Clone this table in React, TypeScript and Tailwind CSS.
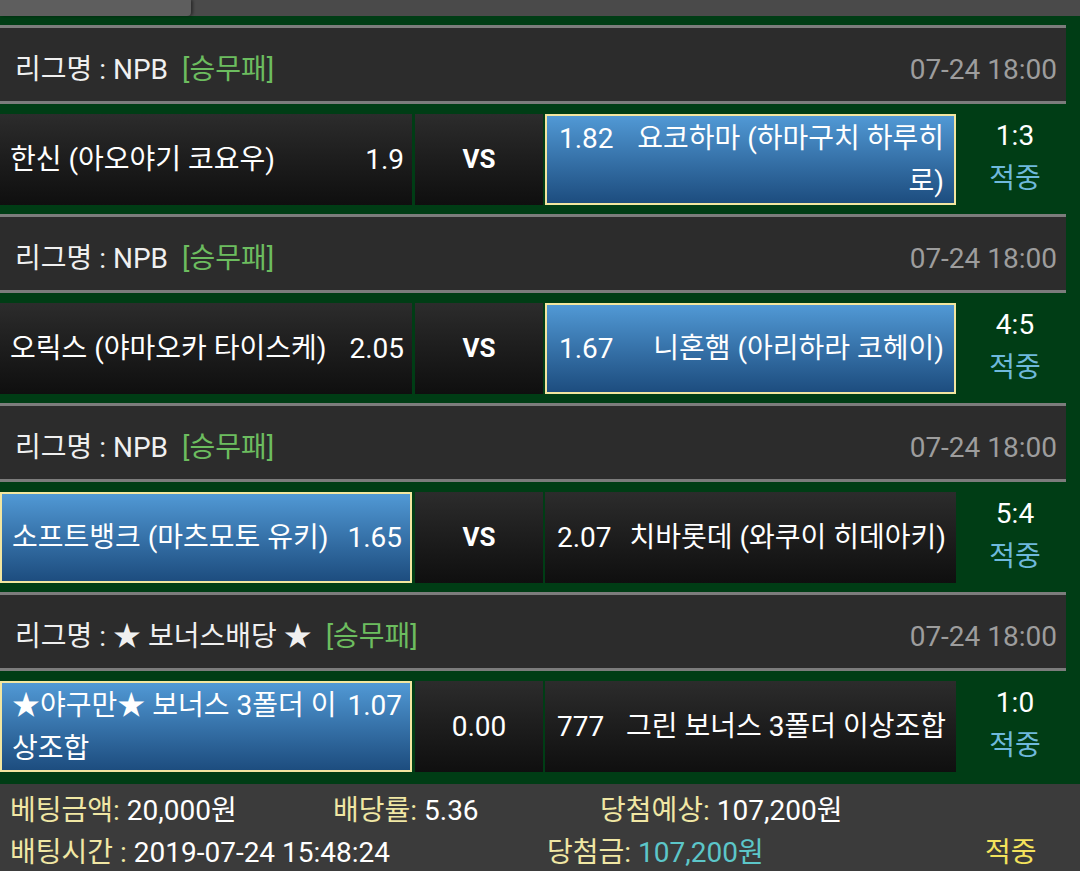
const FONT = "font-['Roboto','Noto_Sans_CJK_KR',sans-serif]"

type Match = {
  league: string
  home: string
  homeOdds: string
  mid: string
  away: string
  awayOdds: string
  pick: 'home' | 'away'
  score: string
}

const matches: Match[] = [
  { league: 'NPB', home: '한신 (아오야기 코요우)', homeOdds: '1.9', mid: 'VS', away: '요코하마 (하마구치 하루히로)', awayOdds: '1.82', pick: 'away', score: '1:3' },
  { league: 'NPB', home: '오릭스 (야마오카 타이스케)', homeOdds: '2.05', mid: 'VS', away: '니혼햄 (아리하라 코헤이)', awayOdds: '1.67', pick: 'away', score: '4:5' },
  { league: 'NPB', home: '소프트뱅크 (마츠모토 유키)', homeOdds: '1.65', mid: 'VS', away: '치바롯데 (와쿠이 히데아키)', awayOdds: '2.07', pick: 'home', score: '5:4' },
  { league: '★ 보너스배당 ★', home: '★야구만★ 보너스 3폴더 이상조합', homeOdds: '1.07', mid: '0.00', away: '그린 보너스 3폴더 이상조합', awayOdds: '777', pick: 'home', score: '1:0' },
]

const blackCell = 'bg-gradient-to-b from-[#2c2c2c] to-[#0f0f0f]'
const blueCell = 'bg-gradient-to-b from-[#5199d5] to-[#1d4d7f] border-2 border-[#f3e6a0]'

function MatchBlock({ m }: { m: Match }) {
  return (
    <div>
      {/* league header */}
      <div className="mr-[14px] h-[79px] border-y-[3px] border-[#7c7c7c] bg-[#2c2c2c] flex items-center justify-between pl-[15px] pr-[9px] pt-[10px]">
        <div className="text-[#f0f0f0]">
          리그명 : {m.league}
          <span className="ml-[14px] text-[#6cbd5f]">[승무패]</span>
        </div>
        <div className="text-[#9d9d9d]">07-24 18:00</div>
      </div>

      {/* match row */}
      <div className="pt-[10px] pb-[9px] flex h-[110px]">
        <div className={`w-[412px] flex items-center pl-[10px] pr-[8px] text-white leading-[43px] ${m.pick === 'home' ? blueCell : blackCell}`}>
          <div className="w-full">
            <span className="float-right ml-[8px]">{m.homeOdds}</span>
            {m.home}
          </div>
        </div>
        <div className={`ml-[3px] w-[128px] flex items-center justify-center text-white ${blackCell} ${m.mid === 'VS' ? 'font-bold text-[26px]' : ''}`}>
          {m.mid}
        </div>
        <div className={`ml-[2px] w-[411px] flex items-center pl-[12px] pr-[10px] text-white leading-[43px] ${m.pick === 'away' ? blueCell : blackCell}`}>
          <div className="w-full text-right">
            <span className="float-left mr-[16px]">{m.awayOdds}</span>
            {m.away}
          </div>
        </div>
        <div className="w-[118px] flex flex-col items-center justify-center leading-[43px] pb-[6px]">
          <span className="text-white">{m.score}</span>
          <span className="text-[#6fb9dc]">적중</span>
        </div>
      </div>
    </div>
  )
}

export default function App() {
  return (
    <div className={`w-[1080px] h-[871px] overflow-hidden bg-[#003d15] text-[28px] ${FONT}`}>
      {/* top tab strip */}
      <div className="h-[16px] bg-[#4a4a4a] flex">
        <div className="w-[191px] h-full bg-[#5e5e5e] rounded-br-[4px] shadow-[2px_0_3px_rgba(0,0,0,0.4)]" />
      </div>
      <div className="h-[9px]" />

      {matches.map((m, i) => (
        <MatchBlock key={i} m={m} />
      ))}

      {/* summary */}
      <div className="mt-[3px] h-[100px] bg-[#3b3b3b] pl-[10px] pt-[6px] leading-[42px]">
        <div className="flex">
          <div className="w-[323px]">
            <span className="text-[#f0e7a4]">베팅금액:</span> <span className="text-white">20,000원</span>
          </div>
          <div className="w-[267px]">
            <span className="text-[#f0e7a4]">배당률:</span> <span className="text-white">5.36</span>
          </div>
          <div>
            <span className="text-[#f0e7a4]">당첨예상:</span> <span className="text-white">107,200원</span>
          </div>
        </div>
        <div className="flex">
          <div className="w-[537px]">
            <span className="text-[#f0e7a4]">배팅시간 :</span> <span className="text-white">2019-07-24 15:48:24</span>
          </div>
          <div className="flex-1">
            <span className="text-[#f0e7a4]">당첨금:</span> <span className="text-[#5cc6c9]">107,200원</span>
          </div>
          <div className="w-[95px] text-[#f4e35c]">적중</div>
        </div>
      </div>
    </div>
  )
}
